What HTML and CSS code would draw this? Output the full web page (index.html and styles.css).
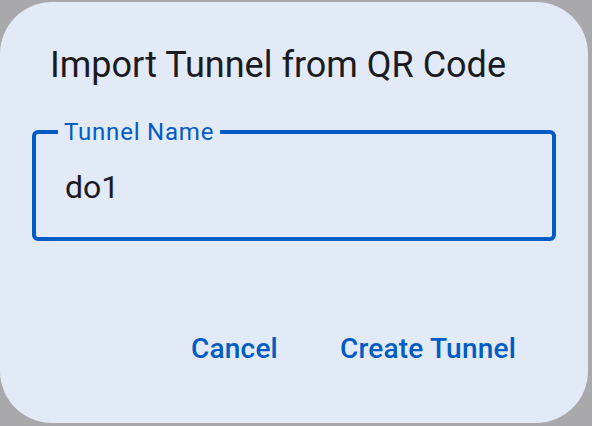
FILE: index.html
```html
<!DOCTYPE html>
<html lang="en">
<head>
    <meta charset="UTF-8">
    <meta name="viewport" content="width=device-width, initial-scale=1.0">
    <title>Import Tunnel</title>
    <link rel="stylesheet" href="styles.css">
</head>
<body>
    <div class="dialog">
        <h1 class="title">Import Tunnel from QR Code</h1>
        <fieldset class="field">
            <legend>Tunnel Name</legend>
            <input type="text" value="do1">
        </fieldset>
        <div class="actions">
            <button>Cancel</button>
            <button>Create Tunnel</button>
        </div>
    </div>
</body>
</html>
```

FILE: styles.css
```css
body {
    margin: 0;
    background-color: #a9a8aa;
    font-family: Roboto, "Noto Sans", sans-serif;
    height: 426px;
    overflow: hidden;
}
.dialog {
    width: 588px;
    height: 421px;
    margin-top: 2px;
    box-sizing: border-box;
    background-color: #e2eaf8;
    border-radius: 52px;
    padding: 41px 32px 0 32px;
}
.title {
    margin: 0 0 0 18px;
    font-size: 36px;
    font-weight: 400;
    color: #1b1b1f;
    line-height: 44px;
}
.field {
    margin: 31px 0 0 0;
    height: 123px;
    box-sizing: border-box;
    border: 4px solid #005bc4;
    border-radius: 6px;
    padding: 0 29px;
}
.field legend {
    color: #005bc4;
    font-size: 24px;
    line-height: 28px;
    letter-spacing: 0.8px;
    padding: 0 6px;
    margin-left: -7px;
}
.field input {
    border: none;
    background: transparent;
    font-family: Roboto, sans-serif;
    font-size: 32px;
    color: #1b1b1f;
    padding: 0;
    margin-top: 22px;
    outline: none;
}
.actions {
    display: flex;
    justify-content: flex-end;
    gap: 62px;
    margin-top: 91px;
    padding-right: 40px;
}
.actions button {
    border: none;
    background: none;
    padding: 0;
    font-family: Roboto, sans-serif;
    font-size: 28px;
    font-weight: 500;
    letter-spacing: 0.2px;
    color: #005bc4;
}
```
